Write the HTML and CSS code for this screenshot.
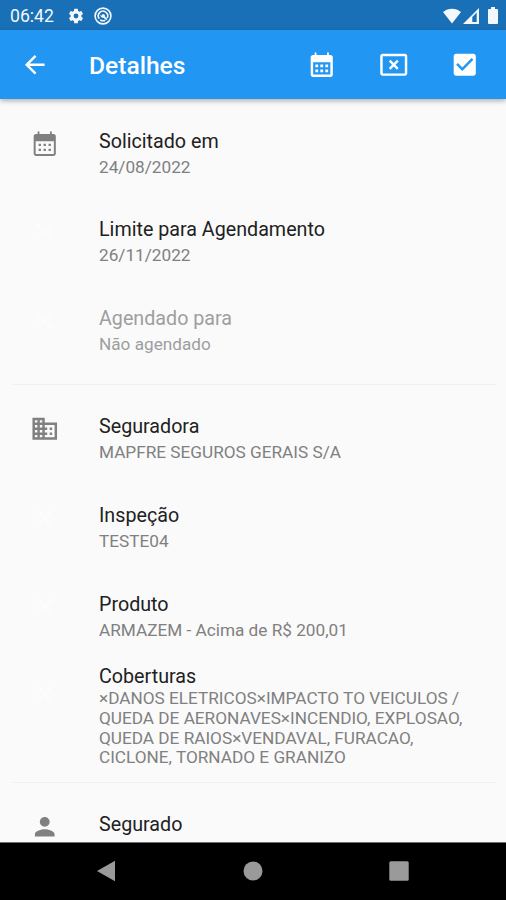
FILE: index.html
```html
<!DOCTYPE html>
<html lang="pt-BR">
<head>
  <meta charset="UTF-8" />
  <meta name="viewport" content="width=device-width, initial-scale=1.0"/>
  <title>Detalhes</title>
  <link rel="stylesheet" href="styles.css">
</head>
<body>
  <div class="status-bar">
    <span class="clock">06:42</span>
    <svg class="status-gear" viewBox="0 0 24 24"><path d="M19.14 12.94c.04-.3.06-.61.06-.94s-.02-.64-.07-.94l2.03-1.58a.49.49 0 0 0 .12-.61l-1.92-3.32a.49.49 0 0 0-.59-.22l-2.39.96a7 7 0 0 0-1.62-.94l-.36-2.54a.48.48 0 0 0-.48-.41h-3.84a.47.47 0 0 0-.47.41l-.36 2.54c-.59.24-1.13.57-1.62.94l-2.39-.96a.48.48 0 0 0-.59.22L2.74 8.87a.47.47 0 0 0 .12.61l2.03 1.58a6 6 0 0 0 0 1.88l-2.03 1.58a.49.49 0 0 0-.12.61l1.92 3.32c.12.22.37.29.59.22l2.39-.96c.5.38 1.03.7 1.62.94l.36 2.54c.05.24.24.41.48.41h3.84c.24 0 .44-.17.47-.41l.36-2.54a7 7 0 0 0 1.62-.94l2.39.96c.22.08.47 0 .59-.22l1.92-3.32a.47.47 0 0 0-.12-.61zM12 15.2a3.2 3.2 0 1 1 0-6.4 3.2 3.2 0 0 1 0 6.4z"/></svg>
    <svg class="status-target" viewBox="0 0 18 18">
      <circle cx="9" cy="9" r="7.9" fill="none" stroke="currentColor" stroke-width="1.6"/>
      <path d="M5.3 11.8A4.7 4.7 0 1 1 13.2 11M6.2 12.8a4.7 4.7 0 0 0 5 .4" fill="none" stroke="currentColor" stroke-width="1.6"/>
      <path d="M6.3 7.6l1.5 1.1.8-1.8c1.8 0 2.8 1.2 2.4 2.7l2.5 2.5-1.2 1.2-2.6-2.5c-1.8.5-3.6-1-3.4-3.2z"/>
    </svg>
    <div class="status-right">
      <svg class="wifi" viewBox="0 0 18 16"><path d="M9 15.6L0 4.1C5-.5 13-.5 18 4.1z"/></svg>
      <svg class="signal" viewBox="0 0 16 16"><path fill-rule="evenodd" d="M0 16L16 0v16zM9.3 8.9v5.2h4.4V4.6z"/></svg>
      <svg class="battery" viewBox="0 0 10 17"><path d="M3 0h4v2h2a1 1 0 0 1 1 1v13a1 1 0 0 1-1 1H1a1 1 0 0 1-1-1V3a1 1 0 0 1 1-1h2z"/></svg>
    </div>
  </div>

  <header class="app-bar">
    <svg class="icon" viewBox="0 0 24 24"><path d="M20 11H7.83l5.59-5.59L12 4l-8 8 8 8 1.41-1.41L7.83 13H20v-2z"/></svg>
    <h1>Detalhes</h1>
    <div class="actions">
      <svg class="icon" viewBox="0 0 24 24"><path fill-rule="evenodd" d="M19.2 4h-1.4V2.5a.7.7 0 0 0-1.5 0V4H7.7V2.5a.7.7 0 0 0-1.5 0V4H4.8C3.8 4 3 4.8 3 5.8v14.4c0 1 .8 1.8 1.8 1.8h14.4c1 0 1.8-.8 1.8-1.8V5.8c0-1-.8-1.8-1.8-1.8zM5 10h14v10H5z"/><path d="M6.8 11.8h2.3v2.3H6.8zm4.05 0h2.3v2.3h-2.3zm4.05 0h2.3v2.3h-2.3zM6.8 15.9h2.3v2.3H6.8zm4.05 0h2.3v2.3h-2.3zm4.05 0h2.3v2.3h-2.3z"/></svg>
      <svg class="icon" viewBox="0 0 24 24"><path d="M21 19.1H3V5h18v14.1zM21 3H3c-1.1 0-2 .9-2 2v14c0 1.1.9 2 2 2h18c1.1 0 2-.9 2-2V5c0-1.1-.9-2-2-2z"/><path d="M14.59 8L12 10.59 9.41 8 8 9.41 10.59 12 8 14.59 9.41 16 12 13.41 14.59 16 16 14.59 13.41 12 16 9.41z"/></svg>
      <svg class="icon" viewBox="0 0 24 24"><path d="M19 3H5c-1.11 0-2 .9-2 2v14c0 1.1.89 2 2 2h14c1.11 0 2-.9 2-2V5c0-1.1-.89-2-2-2zm-9 14l-5-5 1.41-1.41L10 14.17l7.59-7.59L19 8l-9 9z"/></svg>
    </div>
  </header>

  <main class="list">
    <div class="tile">
      <svg class="icon" viewBox="0 0 24 24"><path fill-rule="evenodd" d="M19.2 4h-1.4V2.5a.7.7 0 0 0-1.5 0V4H7.7V2.5a.7.7 0 0 0-1.5 0V4H4.8C3.8 4 3 4.8 3 5.8v14.4c0 1 .8 1.8 1.8 1.8h14.4c1 0 1.8-.8 1.8-1.8V5.8c0-1-.8-1.8-1.8-1.8zM4.6 10h14.8v10.4H4.6z"/><path d="M7 12h1.9v1.9H7zm4.05 0h1.9v1.9h-1.9zm4.05 0H17v1.9h-1.9zM7 16h1.9v1.9H7zm4.05 0h1.9v1.9h-1.9zm4.05 0H17v1.9h-1.9z"/></svg>
      <div class="text">
        <h2>Solicitado em</h2>
        <p>24/08/2022</p>
      </div>
    </div>
    <div class="tile">
      <svg class="icon blank" viewBox="0 0 24 24"><path d="M19 6.41L17.59 5 12 10.59 6.41 5 5 6.41 10.59 12 5 17.59 6.41 19 12 13.41 17.59 19 19 17.59 13.41 12z"/></svg>
      <div class="text">
        <h2>Limite para Agendamento</h2>
        <p>26/11/2022</p>
      </div>
    </div>
    <div class="tile disabled">
      <svg class="icon blank" viewBox="0 0 24 24"><path d="M19 6.41L17.59 5 12 10.59 6.41 5 5 6.41 10.59 12 5 17.59 6.41 19 12 13.41 17.59 19 19 17.59 13.41 12z"/></svg>
      <div class="text">
        <h2>Agendado para</h2>
        <p>Não agendado</p>
      </div>
    </div>

    <hr>

    <div class="tile">
      <svg class="icon" viewBox="0 0 24 24"><path d="M12 7V3H2v18h20V7H12zM6 19H4v-2h2v2zm0-4H4v-2h2v2zm0-4H4V9h2v2zm0-4H4V5h2v2zm4 12H8v-2h2v2zm0-4H8v-2h2v2zm0-4H8V9h2v2zm0-4H8V5h2v2zm10 12h-8v-2h2v-2h-2v-2h2v-2h-2V9h8v10zm-2-8h-2v2h2v-2zm0 4h-2v2h2v-2z"/></svg>
      <div class="text">
        <h2>Seguradora</h2>
        <p>MAPFRE SEGUROS GERAIS S/A</p>
      </div>
    </div>
    <div class="tile">
      <svg class="icon blank" viewBox="0 0 24 24"><path d="M19 6.41L17.59 5 12 10.59 6.41 5 5 6.41 10.59 12 5 17.59 6.41 19 12 13.41 17.59 19 19 17.59 13.41 12z"/></svg>
      <div class="text">
        <h2>Inspeção</h2>
        <p>TESTE04</p>
      </div>
    </div>
    <div class="tile">
      <svg class="icon blank" viewBox="0 0 24 24"><path d="M19 6.41L17.59 5 12 10.59 6.41 5 5 6.41 10.59 12 5 17.59 6.41 19 12 13.41 17.59 19 19 17.59 13.41 12z"/></svg>
      <div class="text">
        <h2>Produto</h2>
        <p>ARMAZEM - Acima de R$ 200,01</p>
      </div>
    </div>
    <div class="tile tall">
      <svg class="icon blank" viewBox="0 0 24 24"><path d="M19 6.41L17.59 5 12 10.59 6.41 5 5 6.41 10.59 12 5 17.59 6.41 19 12 13.41 17.59 19 19 17.59 13.41 12z"/></svg>
      <div class="text">
        <h2>Coberturas</h2>
        <p>×DANOS ELETRICOS×IMPACTO TO VEICULOS /<br>QUEDA DE AERONAVES×INCENDIO, EXPLOSAO,<br>QUEDA DE RAIOS×VENDAVAL, FURACAO,<br>CICLONE, TORNADO E GRANIZO</p>
      </div>
    </div>

    <hr>

    <div class="tile">
      <svg class="icon" viewBox="0 0 24 24"><path d="M12 12c2.21 0 4-1.79 4-4s-1.79-4-4-4-4 1.79-4 4 1.79 4 4 4zm0 2c-2.67 0-8 1.34-8 4v2h16v-2c0-2.66-5.33-4-8-4z"/></svg>
      <div class="text">
        <h2>Segurado</h2>
      </div>
    </div>
  </main>

  <nav class="nav-bar">
    <svg viewBox="0 0 22 22"><path d="M2 11L20 .8v20.4z"/></svg>
    <svg viewBox="0 0 22 22"><circle cx="11" cy="11" r="9.5"/></svg>
    <svg viewBox="0 0 22 22"><rect x="1.3" y="1.3" width="19.4" height="19.4" rx="1.5"/></svg>
  </nav>
</body>
</html>
```
FILE: styles.css
```css
html, body {
  margin: 0;
  padding: 0;
  height: 100%;
  overflow: hidden;
}

body {
  display: flex;
  flex-direction: column;
  background: #fafafa;
  font-family: Roboto, sans-serif;
}

svg {
  display: block;
  flex: none;
  fill: currentColor;
}

h1, h2, p {
  margin: 0;
  font-weight: 400;
  white-space: nowrap;
}

.icon {
  width: 29.5px;
  height: 29.5px;
}

/* status bar */
.status-bar {
  flex: none;
  display: flex;
  align-items: center;
  height: 30px;
  box-sizing: border-box;
  padding: 1px 8px 0 10px;
  background: #1a70b7;
  color: #f4f8fc;
}

.clock {
  width: 57px;
  font-size: 17.6px;
  line-height: 30px;
}

.status-gear {
  width: 18px;
  height: 18px;
}

.status-target {
  width: 18px;
  height: 18px;
  margin-left: 9px;
}

.status-right {
  display: flex;
  align-items: center;
  margin-left: auto;
}

.wifi {
  width: 18px;
  height: 16px;
}

.signal {
  width: 16px;
  height: 16px;
  margin-left: 2px;
}

.battery {
  width: 10px;
  height: 17px;
  margin-left: 9px;
}

/* app bar */
.app-bar {
  flex: none;
  display: flex;
  align-items: center;
  height: 69px;
  box-sizing: border-box;
  padding: 0 26.5px 0 20px;
  background: #2196f3;
  color: #fff;
  box-shadow: 0 2px 5px rgba(0, 0, 0, 0.3);
  z-index: 1;
}

.app-bar h1 {
  margin-left: 39.5px;
  padding-top: 1px;
  font-size: 24.6px;
  font-weight: 500;
}

.actions {
  display: flex;
  gap: 42px;
  margin-left: auto;
}

/* list */
.list {
  flex: 1;
  min-height: 0;
  overflow: hidden;
  padding: 9.9px 10px 0 12px;
}

.tile {
  display: flex;
  height: 88.6px;
  box-sizing: border-box;
  padding: 20px 0 0 18px;
  color: #808080;
}

.tile .text {
  margin-left: 39.5px;
}

.tile h2 {
  font-size: 19.7px;
  line-height: 26px;
  color: #212121;
}

.tile p {
  font-size: 17.2px;
  line-height: 19.7px;
  margin-top: 3px;
  color: #808080;
}

.tile.disabled h2,
.tile.disabled p {
  color: #9e9e9e;
}

.tile.tall {
  height: 112px;
  padding-top: 4px;
}

.tile.tall p {
  margin-top: -1px;
}

.tile.tall .icon {
  margin-top: 15px;
}

.blank {
  color: #fcfcfc;
}

hr {
  height: 1px;
  margin: 9.4px 0;
  border: 0;
  background: #f0f0f0;
}

/* navigation bar */
.nav-bar {
  flex: none;
  display: flex;
  justify-content: space-between;
  align-items: center;
  height: 58.5px;
  box-sizing: border-box;
  padding: 0 96px 0 95px;
  border-top: 1px solid #6e6e6e;
  background: #000;
  color: #9a9a9a;
}

.nav-bar svg {
  width: 22px;
  height: 22px;
}
```
